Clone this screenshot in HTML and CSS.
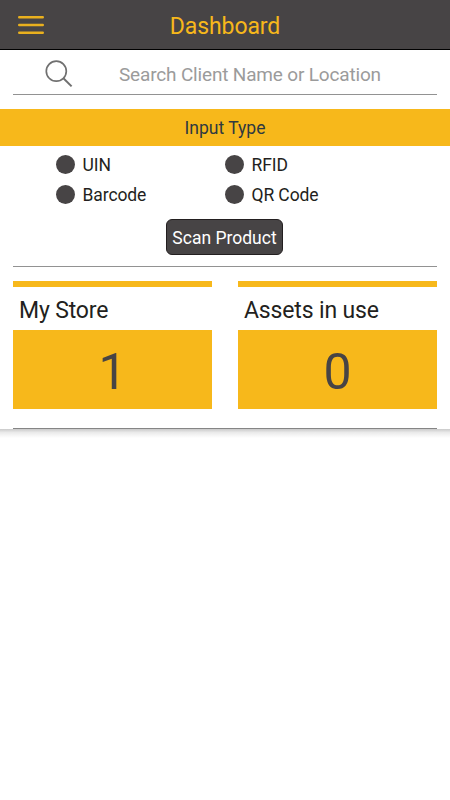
FILE: index.html
```html
<!DOCTYPE html>
<html lang="en">
<head>
    <meta charset="UTF-8">
    <meta name="viewport" content="width=device-width, initial-scale=1.0">
    <title>Dashboard</title>
    <link rel="stylesheet" href="styles.css">
</head>
<body>
    <div class="panel">
        <header class="header">
            <button class="menu" aria-label="Menu">
                <svg width="26" height="20" viewBox="0 0 26 20">
                    <path d="M1.2 2.2H24.8M1.2 10H24.8M1.2 17.7H24.8" fill="none" stroke="#e9b01e" stroke-width="2.4" stroke-linecap="round"/>
                </svg>
            </button>
            <h1>Dashboard</h1>
        </header>

        <div class="search">
            <svg width="28" height="28" viewBox="0 0 28 28">
                <circle cx="11.3" cy="11.2" r="10" fill="none" stroke="#707070" stroke-width="1.7"/>
                <path d="M18.4 18.3L26.6 26.4" fill="none" stroke="#707070" stroke-width="2"/>
            </svg>
            <span class="placeholder">Search Client Name or Location</span>
        </div>

        <h2 class="bar">Input Type</h2>

        <div class="types">
            <label><i class="dot"></i><span>UIN</span></label>
            <label><i class="dot"></i><span>RFID</span></label>
            <label><i class="dot"></i><span>Barcode</span></label>
            <label><i class="dot"></i><span>QR Code</span></label>
        </div>

        <div class="scan">
            <button class="btn">Scan Product</button>
        </div>

        <div class="cards">
            <div class="card">
                <h3>My Store</h3>
                <div class="count">1</div>
            </div>
            <div class="card">
                <h3>Assets in use</h3>
                <div class="count">0</div>
            </div>
        </div>
    </div>
    <div class="shadow"></div>
</body>
</html>
```

FILE: styles.css
```css
* {
    margin: 0;
    padding: 0;
    box-sizing: border-box;
}
body {
    background-color: white;
    font-family: Roboto, "Liberation Sans", sans-serif;
    color: #231f20;
}
h1, h2, h3 {
    font-weight: normal;
}
button {
    border: none;
    background: none;
    font-family: inherit;
}
.panel {
    height: 429px;
    background-color: white;
}
.shadow {
    height: 9px;
    background: linear-gradient(#cacaca, #ebebeb 40%, white);
}

/* Header */
.header {
    display: grid;
    grid-template-columns: 44px 1fr 44px;
    align-items: center;
    height: 50px;
    background-color: #474445;
    border-bottom: 1px solid black;
}
.menu {
    padding-left: 18px;
    height: 20px;
}
.menu svg {
    display: block;
}
.header h1 {
    padding-top: 4px;
    text-align: center;
    font-size: 23px;
    line-height: 29px;
    letter-spacing: -0.1px;
    color: #f7b81b;
}

/* Search */
.search {
    display: flex;
    align-items: center;
    gap: 46px;
    height: 45px;
    margin: 0 13px;
    padding: 4px 0 0 32px;
    border-bottom: 1px solid #929292;
}
.placeholder {
    padding-top: 1px;
    font-size: 19px;
    letter-spacing: -0.17px;
    color: #9b9b9b;
}

/* Input types */
.bar {
    height: 37px;
    margin-top: 14px;
    padding-top: 1px;
    text-align: center;
    font-size: 17.5px;
    line-height: 37px;
    background-color: #f7b81b;
    color: #2f3a40;
}
.types {
    display: grid;
    grid-template-columns: 169px 169px;
    grid-auto-rows: 30px;
    height: 64px;
    padding: 3px 0 0 56px;
}
.types label {
    display: flex;
    align-items: center;
    gap: 7.5px;
    font-size: 17.5px;
    letter-spacing: -0.1px;
}
.types span {
    padding-top: 1px;
}
.dot {
    width: 19px;
    height: 19px;
    border-radius: 50%;
    background-color: #474445;
}
.scan {
    height: 57px;
    margin: 0 13px;
    padding: 9px 1px 0 0;
    text-align: center;
    border-bottom: 1px solid #929292;
}
.btn {
    width: 117px;
    height: 36px;
    padding-top: 2px;
    border: 1px solid #231f20;
    border-radius: 6px;
    background-color: #474445;
    font-size: 17.5px;
    color: white;
}

/* Cards */
.cards {
    display: grid;
    grid-template-columns: 1fr 1fr;
    gap: 26px;
    height: 162px;
    margin: 0 13px;
    padding-top: 14px;
    border-bottom: 1px solid #858585;
}
.card {
    height: 128px;
    border-top: 6px solid #f7b81b;
}
.card h3 {
    height: 43px;
    padding: 2px 0 0 6px;
    font-size: 23px;
    line-height: 43px;
    letter-spacing: -0.15px;
}
.count {
    height: 79px;
    text-align: center;
    font-size: 50px;
    line-height: 84px;
    background-color: #f7b81b;
    color: #474445;
}
```
